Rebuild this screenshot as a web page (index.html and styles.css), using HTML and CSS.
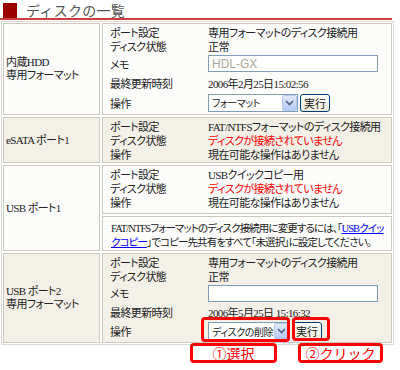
FILE: index.html
```html
<!DOCTYPE html>
<html lang="ja">
<head>
    <meta charset="UTF-8">
    <title>ディスクの一覧</title>
    <link rel="stylesheet" href="styles.css">
</head>
<body>
    <div class="page">
        <h2 class="title"><span class="title-mark"></span><span class="title-text">ディスクの一覧</span></h2>

        <div class="disk-table">
            <!-- 内蔵HDD -->
            <div class="port light">内蔵HDD<br>専用フォーマット</div>
            <div class="detail light">
                <div class="item"><span class="label">ポート設定</span><span>専用フォーマットのディスク接続用</span></div>
                <div class="item"><span class="label">ディスク状態</span><span>正常</span></div>
                <div class="item tall"><span class="label">メモ</span><input class="memo" type="text" value="HDL-GX" disabled></div>
                <div class="item time"><span class="label">最終更新時刻</span><span>2006年2月25日15:02:56</span></div>
                <div class="item tall">
                    <span class="label">操作</span>
                    <span class="select wide">
                        <select><option>フォーマット</option></select>
                        <span class="select-arrow"><svg width="9" height="6" viewBox="0 0 9 6"><path d="M1 1l3.5 3.5L8 1" fill="none" stroke="#4d6185" stroke-width="1.6"/></svg></span>
                    </span>
                    <button class="run">実行</button>
                </div>
            </div>

            <!-- eSATA -->
            <div class="port shade">eSATA ポート1</div>
            <div class="detail shade">
                <div class="item"><span class="label">ポート設定</span><span>FAT/NTFSフォーマットのディスク接続用</span></div>
                <div class="item"><span class="label">ディスク状態</span><span class="warn">ディスクが接続されていません</span></div>
                <div class="item"><span class="label">操作</span><span>現在可能な操作はありません</span></div>
            </div>

            <!-- USB 1 -->
            <div class="port light span2">USB ポート1</div>
            <div class="detail light split">
                <div class="item"><span class="label">ポート設定</span><span>USBクイックコピー用</span></div>
                <div class="item"><span class="label">ディスク状態</span><span class="warn">ディスクが接続されていません</span></div>
                <div class="item"><span class="label">操作</span><span>現在可能な操作はありません</span></div>
            </div>
            <div class="note light">FAT/NTFSフォーマットのディスク接続用に変更するには、「<a href="#">USBクイックコピー</a>」でコピー先共有をすべて「未選択」に設定してください。</div>

            <!-- USB 2 -->
            <div class="port shade">USB ポート2<br>専用フォーマット</div>
            <div class="detail shade compact">
                <div class="item"><span class="label">ポート設定</span><span>専用フォーマットのディスク接続用</span></div>
                <div class="item"><span class="label">ディスク状態</span><span>正常</span></div>
                <div class="item tall"><span class="label">メモ</span><input class="memo" type="text" value=""></div>
                <div class="item time"><span class="label">最終更新時刻</span><span>2006年5月25日 15:16:32</span></div>
                <div class="item tall">
                    <span class="label">操作</span>
                    <span class="select">
                        <select><option>ディスクの削除</option></select>
                        <span class="select-arrow"><svg width="9" height="6" viewBox="0 0 9 6"><path d="M1 1l3.5 3.5L8 1" fill="none" stroke="#4d6185" stroke-width="1.6"/></svg></span>
                    </span>
                    <button class="run">実行</button>
                </div>
            </div>
        </div>

        <!-- annotations -->
        <div class="mark mark-select"></div>
        <div class="mark mark-button"></div>
        <div class="callout callout-1">①選択</div>
        <div class="callout callout-2">②クリック</div>
    </div>
</body>
</html>
```

FILE: styles.css
```css
body {
    margin: 0;
    font-family: "Liberation Serif", "Noto Sans CJK JP", serif;
    font-size: 11px;
    letter-spacing: -0.6px;
    color: #222;
    background: #fff;
    font-feature-settings: "palt" 1;
}
.page {
    position: relative;
    width: 400px;
    height: 370px;
}
.title {
    display: flex;
    align-items: flex-end;
    gap: 9px;
    width: 392px;
    height: 15px;
    margin: 0;
    padding-top: 3px;
    border-bottom: 2px solid #c9403f;
    font: normal 14px/15px "Noto Sans CJK JP", sans-serif;
    letter-spacing: 0.3px;
    color: #555;
}
.title-mark {
    width: 14px;
    height: 15px;
    margin-left: 3px;
    background: #990000;
}
.disk-table {
    display: grid;
    grid-template-columns: 97px 1fr;
    gap: 2px;
    width: 393px;
    box-sizing: border-box;
    margin: 1px 0 0 1px;
    padding: 1px;
    border: 1px solid #dedad2;
}
.light {
    background: #fcfcfb;
}
.shade {
    background: #f3f0e8;
}
.port {
    display: flex;
    align-items: center;
    padding: 0 2px;
    line-height: 13px;
    border: 1px solid #cdc9be;
}
.span2 {
    grid-row: span 2;
}
.detail {
    padding: 1px 7px;
    border: 1px solid #cdc9be;
}
.detail.split {
    padding-bottom: 4px;
}
.item {
    display: flex;
    align-items: center;
    height: 14px;
    white-space: nowrap;
}
.item.tall {
    height: 21px;
}
.compact .item.tall {
    height: 20px;
}
.item.time {
    height: 18px;
}
.label {
    flex: none;
    width: 98px;
}
.warn {
    color: #ff0000;
}
.note {
    grid-column: 2;
    padding: 5px 4px 0 8px;
    font-size: 10.5px;
    line-height: 14px;
    letter-spacing: -0.9px;
    border: 1px solid #cdc9be;
}
.note a {
    color: #0000ff;
}
.memo {
    width: 170px;
    height: 17px;
    box-sizing: border-box;
    margin: 0;
    padding: 0 3px;
    border: 1px solid #7f9db9;
    background: #fff;
    font: 12px "Liberation Sans", sans-serif;
    letter-spacing: 0;
    color: #222;
}
.memo:disabled {
    color: #aca899;
}
.select {
    position: relative;
    display: inline-block;
    width: 82px;
    height: 18px;
}
.select.wide {
    width: 90px;
}
.select select {
    appearance: none;
    width: 100%;
    height: 100%;
    margin: 0;
    padding: 0 15px 0 3px;
    border: 1px solid #7f9db9;
    border-radius: 0;
    background: #fff;
    font: 10px "Noto Sans CJK JP", sans-serif;
    font-feature-settings: "palt" 1;
    letter-spacing: -0.4px;
    color: #222;
}
.select-arrow {
    position: absolute;
    top: 1px;
    right: 1px;
    display: flex;
    align-items: center;
    justify-content: center;
    width: 15px;
    height: 16px;
    box-sizing: border-box;
    border: 1px solid #b9c9ef;
    border-radius: 2px;
    background: linear-gradient(#e2eafd, #b4c8f5);
}
.run {
    width: 30px;
    height: 18px;
    margin-left: 2px;
    padding: 0;
    border: 1px solid #003c74;
    border-radius: 3px;
    background: linear-gradient(#ffffff, #ece9d8);
    font: 11px "Noto Sans CJK JP", sans-serif;
    color: #222;
}
.mark {
    position: absolute;
    box-sizing: border-box;
    border: 3px solid #ff0000;
    border-radius: 4px;
}
.mark-select {
    left: 201px;
    top: 317px;
    width: 89px;
    height: 25px;
}
.mark-button {
    left: 292px;
    top: 317px;
    width: 38px;
    height: 24px;
}
.callout {
    position: absolute;
    top: 343px;
    display: flex;
    align-items: center;
    justify-content: center;
    height: 20px;
    box-sizing: border-box;
    border: 3px solid #ff0000;
    border-radius: 4px;
    background: #fff;
    color: #ff0000;
    font: 14px/1 "Noto Sans CJK JP", sans-serif;
    letter-spacing: 0;
    font-feature-settings: normal;
}
.callout-1 {
    left: 190px;
    width: 87px;
}
.callout-2 {
    left: 298px;
    width: 85px;
}
```
